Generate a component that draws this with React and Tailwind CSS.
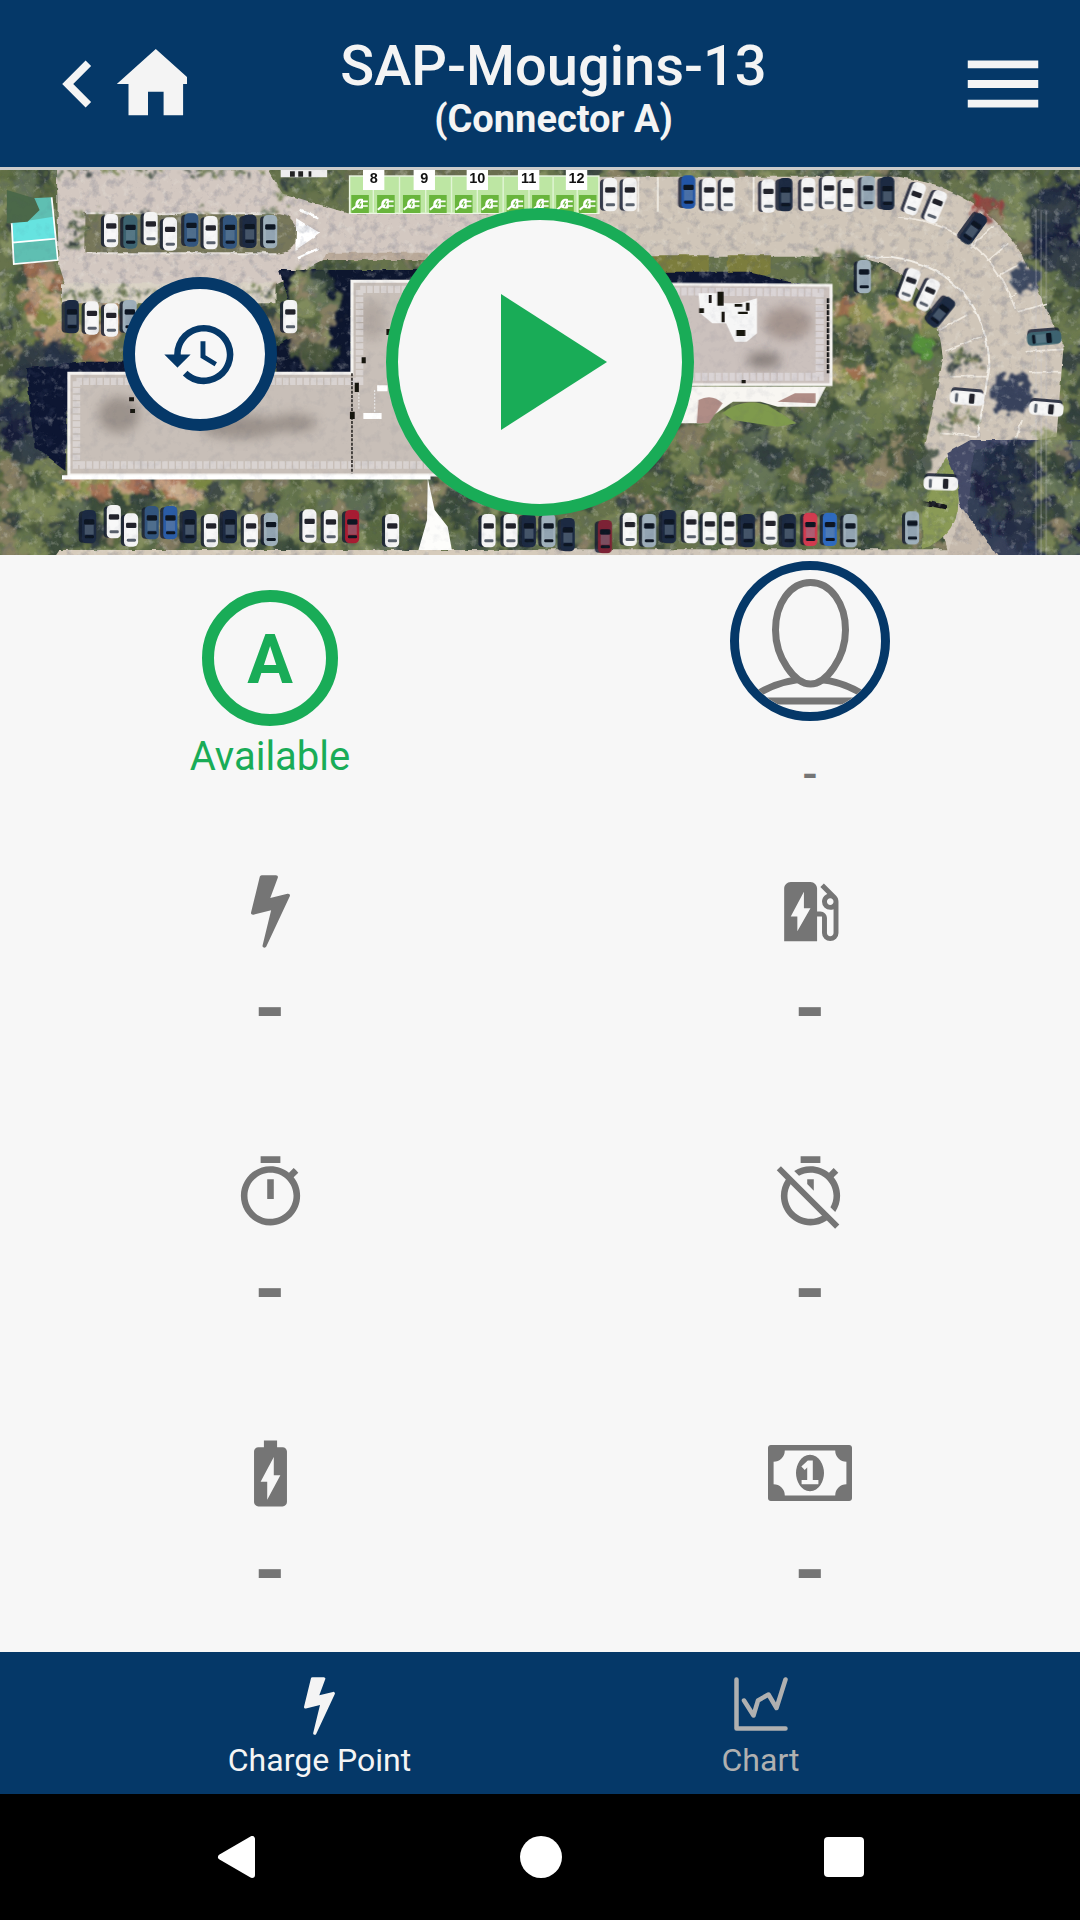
import React from "react";
import { MdBatteryChargingFull, MdEvStation, MdHistory } from "react-icons/md";

/* ---------- Icons ---------- */

const BOLT =
  "M1333 566q18 20 7 44l-540 1157q-13 25-42 25-4 0-14-2-17-5-25.5-19t-4.500-30l197-808-406 101q-4 1-12 1-18 0-31-11-18-15-13-39l201-825q4-14 16-23t28-9h328q19 0 32 12.500t13 29.500q0 8-5 18l-171 463 396-98q8-2 12-2 19 0 34 15z";

function Bolt({ className }) {
  return (
    <svg viewBox="448 128 897 1664" fill="currentColor" className={className} aria-hidden="true">
      <path d={BOLT} />
    </svg>
  );
}

function Money({ className }) {
  return (
    <svg viewBox="0 256 1920 1280" fill="currentColor" className={className} aria-hidden="true">
      <path d="M768 1152h384v-96h-128v-448h-114l-148 137 77 80q42-37 55-57h2v288h-128v96zm512-256q0 70-21 142t-59.5 134-101.5 101-138 39-138-39-101.5-101-59.5-134-21-142 21-142 59.5-134 101.5-101 138-39 138 39 101.5 101 59.5 134 21 142zm512 256v-512q-106 0-181-75t-75-181h-1152q0 106-75 181t-181 75v512q106 0 181 75t75 181h1152q0-106 75-181t181-75zm128-832v1152q0 26-19 45t-45 19h-1792q-26 0-45-19t-19-45v-1152q0-26 19-45t45-19h1792q26 0 45 19t19 45z" />
    </svg>
  );
}

function Timer() {
  return (
    <svg viewBox="0 0 24 24" fill="currentColor" className="h-[79px] w-[79px]" aria-hidden="true">
      <path d="M15 1H9v2h6V1zm-4 13h2V8h-2v6zm8.030-6.610l1.420-1.420c-.43-.51-.9-.99-1.410-1.410l-1.420 1.420C16.070 4.740 14.120 4 12 4c-4.970 0-9 4.030-9 9s4.020 9 9 9 9-4.030 9-9c0-2.120-.74-4.070-1.970-5.610zM12 20c-3.870 0-7-3.130-7-7s3.130-7 7-7 7 3.130 7 7-3.130 7-7 7z" />
    </svg>
  );
}

function TimerOff() {
  return (
    <svg viewBox="0 0 24 24" fill="currentColor" className="h-[79px] w-[79px]" aria-hidden="true">
      <path d="M19.040 4.550l-1.420 1.420C16.070 4.740 14.120 4 12 4c-1.830 0-3.530.55-4.950 1.480l1.460 1.460C9.530 6.350 10.730 6 12 6c3.870 0 7 3.130 7 7 0 1.270-.35 2.470-.94 3.490l1.450 1.450C20.450 16.530 21 14.830 21 13c0-2.120-.74-4.070-1.970-5.610l1.420-1.420-1.410-1.420zM15 1H9v2h6V1zm-4 8.440l2 2V8h-2v1.440zM3.020 4L1.750 5.270 4.500 8.030C3.550 9.450 3 11.160 3 13c0 4.970 4.020 9 9 9 1.840 0 3.550-.55 4.980-1.500l2.500 2.500 1.270-1.270-7.710-7.710L3.020 4zM12 20c-3.870 0-7-3.130-7-7 0-1.280.35-2.480.95-3.520l9.560 9.560c-1.030.61-2.230.96-3.510.96z" />
    </svg>
  );
}

function ChartIcon() {
  return (
    <svg viewBox="0 0 54 54" className="h-[54px] w-[54px]" fill="none" stroke="currentColor" strokeWidth="4.500" strokeLinecap="round" strokeLinejoin="round" aria-hidden="true">
      <path d="M2.500 2.500V51.500H51.500" />
      <path d="M10 23.500L19.500 38.500L24 23.500L34.500 17.500L42.500 31L51.500 2.500" />
    </svg>
  );
}

function Person() {
  return (
    <svg viewBox="0 0 142 142" className="h-full w-full" fill="none" stroke="#757575" strokeWidth="7" aria-hidden="true">
      <path d="M-4 142C20 118 46 109 71 109S122 118 146 142" />
      <path d="M-4 131H146" />
      <path d="M71.500 114C56 114 36.500 88 36.500 60C36.500 34 51 12.500 71.500 12.500S106.500 34 106.500 60C106.500 88 87 114 71.500 114Z" fill="#f7f7f7" />
    </svg>
  );
}

/* ---------- Aerial view of the car park ---------- */

function seeded(seed) {
  let s = seed;
  return () => {
    s = (s * 16807) % 2147483647;
    return s / 2147483647;
  };
}

const GREENS = ["#56663f", "#6f7d50", "#43533a", "#7f8b59", "#36463a", "#5f6f4b", "#8b9564", "#8f8268", "#2e3b3d", "#66755a"];
const DARKS = ["#1b2440", "#253145", "#2f3b42", "#161d38", "#39454a"];
const WARM = ["#c39c80", "#8e9554", "#cfb292", "#75843f", "#a46a50", "#b5ae78"];

function Foliage({ area, count, seed, size = 26, colors = GREENS }) {
  const [x, y, w, h] = area;
  const rnd = seeded(seed);
  const blobs = Array.from({ length: count }, () => ({
    cx: x + rnd() * w,
    cy: y + rnd() * h,
    r: size * (0.35 + rnd() * 0.75),
    c: colors[Math.floor(rnd() * colors.length)],
  }));
  return blobs.map((b, i) => <circle key={i} cx={b.cx} cy={b.cy} r={b.r} fill={b.c} opacity="0.8" />);
}

const W = "#f4f4f4";
const B = "#31557e";
const K = "#1d2b42";
const S = "#9fb0bb";
const T = "#3d6470";

function Car({ x, y, c = W, a = 0 }) {
  const light = c === W;
  return (
    <g transform={`translate(${x} ${y}) rotate(${a})`}>
      <rect x="-29" y="-46" width="46" height="94" rx="12" fill="#10162e" opacity="0.8" />
      <rect x="-20" y="-50" width="41" height="100" rx="14" fill={c} />
      <rect x="-14" y="-22" width="30" height="16" rx="4" fill={light ? "#20242c" : "#0d1423"} />
      <rect x="-12" y="26" width="27" height="9" rx="4" fill={light ? "#59616c" : "#0d1423"} />
      <rect x="-12" y="-6" width="26" height="30" fill={light ? "#ffffff" : "#7f93a5"} opacity="0.4" />
    </g>
  );
}

const WEST_CARS = [
  [322, 212, W], [378, 216, T], [437, 206, W], [493, 222, W], [555, 210, B], [611, 218, W], [667, 216, B], [724, 214, K], [784, 215, S],
  [208, 470, K], [266, 474, W], [322, 480, W], [376, 470, S], [842, 470, W],
  [258, 1100, K], [330, 1085, W], [380, 1110, W], [440, 1088, B], [494, 1088, "#2c5ba6"], [550, 1100, K], [612, 1112, W], [667, 1100, K], [728, 1112, W], [786, 1108, S],
  [898, 1098, W], [960, 1100, W], [1022, 1100, "#a81f33"], [1138, 1112, W], [1418, 1112, W], [1482, 1112, W], [1535, 1112, K],
];

const EAST_CARS = [
  [203, 104, W], [260, 104, W], [430, 96, "#2457a8"], [490, 104, W], [545, 104, W], [662, 108, W], [712, 104, K], [778, 104, W], [838, 98, W], [893, 106, W], [952, 98, S], [1008, 100, K], [1088, 116, W, 20], [1148, 140, W, 22], [1258, 206, K, 35],
  [940, 350, S], [1072, 374, W, 20], [1126, 404, W, 25], [1164, 456, K, 38], [1464, 534, T, 85], [1240, 714, W, 95], [1470, 746, W, 95], [1164, 970, W, 92],
  [24, 1112, S], [80, 1124, K], [188, 1130, "#7c2434"], [260, 1108, W], [316, 1112, S], [374, 1100, K], [438, 1100, W], [492, 1106, W], [548, 1106, W], [603, 1112, K], [668, 1104, W], [722, 1112, K], [784, 1108, "#d33a50"], [841, 1108, "#2f6bc0"], [900, 1112, S], [1080, 1104, S],
];

function Plug({ x }) {
  return (
    <g transform={`translate(${x} 105)`}>
      <rect width="51" height="54" fill="#69b53c" />
      <path d="M2 44L16 32" stroke="#fff" strokeWidth="6" />
      <path d="M12 30C12 14 22 10 34 12V40C22 42 12 40 12 30Z" fill="#fff" />
      <path d="M32 19H48M32 33H48" stroke="#fff" strokeWidth="5" />
      <path d="M27 17L21 27H28L24 36" stroke="#69b53c" strokeWidth="3" fill="none" />
    </g>
  );
}

function Bay({ x, label }) {
  return (
    <g>
      <rect x={x - 31} y="28" width="62" height="62" fill="#fff" />
      <text x={x} y="70" textAnchor="middle" fontSize="42" fontWeight="700" fill="#111" fontFamily="Liberation Sans, Arial, sans-serif">
        {label}
      </text>
    </g>
  );
}

const WEST = "translate(0 -10) scale(.3444 .3333)";
const EAST = "translate(540 -10) scale(.3444 .3333)";

function Aerial() {
  return (
    <svg viewBox="0 0 1080 385" preserveAspectRatio="xMidYMid slice" className="absolute inset-0 h-full w-full" role="img" aria-label="Aerial view of the car park">
      <defs>
        <filter id="rough" x="-5%" y="-5%" width="110%" height="110%">
          <feTurbulence type="fractalNoise" baseFrequency="0.09" numOctaves="3" seed="4" result="n" />
          <feDisplacementMap in="SourceGraphic" in2="n" scale="26" xChannelSelector="R" yChannelSelector="G" result="d" />
          <feGaussianBlur in="d" stdDeviation="0.9" />
        </filter>
        <filter id="soft" x="0" y="0" width="100%" height="100%">
          <feTurbulence type="fractalNoise" baseFrequency="0.1" numOctaves="2" seed="9" result="n" />
          <feDisplacementMap in="SourceGraphic" in2="n" scale="4" xChannelSelector="R" yChannelSelector="G" result="d" />
          <feGaussianBlur in="d" stdDeviation="0.5" />
        </filter>
        <filter id="photo" x="0" y="0" width="100%" height="100%">
          <feGaussianBlur stdDeviation="0.5" />
        </filter>
        <filter id="smudge" x="-30%" y="-30%" width="160%" height="160%">
          <feGaussianBlur stdDeviation="16" />
        </filter>
        <filter id="grain" x="0" y="0" width="100%" height="100%">
          <feTurbulence type="fractalNoise" baseFrequency="0.11" numOctaves="4" seed="2" />
          <feColorMatrix values="0 0 0 0 0.08  0 0 0 0 0.1  0 0 0 0 0.18  3 0 0 0 -1.5" />
        </filter>
        <filter id="glint" x="0" y="0" width="100%" height="100%">
          <feTurbulence type="fractalNoise" baseFrequency="0.13" numOctaves="4" seed="21" />
          <feColorMatrix values="0 0 0 0 0.85  0 0 0 0 0.84  0 0 0 0 0.78  0 3.500 0 0 -2" />
        </filter>
      </defs>

      <rect width="1080" height="385" fill="#67734c" />

      {/* Planting */}
      <g filter="url(#rough)">
        <g transform={WEST}>
          <Foliage area={[0, 20, 130, 1180]} count={130} seed={11} size={44} />
          <Foliage area={[90, 300, 230, 310]} count={70} seed={12} size={36} colors={WARM} />
          <Foliage area={[20, 560, 160, 330]} count={40} seed={13} size={50} colors={DARKS} />
          <Foliage area={[160, 950, 1408, 230]} count={320} seed={14} size={40} />
          <Foliage area={[180, 950, 420, 60]} count={45} seed={15} size={30} colors={WARM} />
          <Foliage area={[780, 300, 260, 340]} count={110} seed={16} size={46} />
          <Foliage area={[1200, 290, 368, 50]} count={30} seed={17} size={26} />
        </g>
        <g transform={EAST}>
          <Foliage area={[0, 20, 1568, 30]} count={110} seed={21} size={28} />
          <Foliage area={[300, 720, 800, 340]} count={260} seed={22} size={50} />
          <Foliage area={[780, 280, 380, 330]} count={110} seed={23} size={44} />
          <Foliage area={[1320, 30, 248, 1160]} count={220} seed={25} size={52} />
          <Foliage area={[1450, 60, 118, 280]} count={40} seed={26} size={50} colors={DARKS} />
          <Foliage area={[0, 1020, 1200, 170]} count={140} seed={28} size={32} />
        </g>
      </g>

      {/* Roads and shadows */}
      <g filter="url(#soft)">
        <g transform={WEST}>
          <path d="M165 28H780L820 100L1010 160H1570V290H960L800 375H190L170 310Z" fill="#d3c8c1" />
          <path d="M1000 28H1570V60H1000Z" fill="#6a6e50" />
          <path d="M170 1170H1570V1200H150Z" fill="#d6cbbb" />
          <path d="M950 278H1240V300H940Z" fill="#b9a999" />
          <path d="M810 330H1570V372H1020V645H800V560L870 520Z" fill="#10182f" />
          <path d="M75 625L250 605H520V650H200L190 930L100 860Z" fill="#0d1733" />
          <path d="M245 160H810C880 170 880 275 810 280H245Z" fill="#77775a" />
          <path d="M250 160H800M250 280H800" stroke="#e8e2dc" strokeWidth="6" />
          <path d="M180 400H800" stroke="#d9d2c4" strokeWidth="60" />
          <path d="M860 175L930 220L858 270Z" fill="#fff" />
          <path d="M870 150L925 175M865 295L925 268" stroke="#fff" strokeWidth="8" />
        </g>
        <g transform={EAST}>
          <path d="M-5 50H1040C1230 80 1380 180 1450 400L1520 560L1500 830L1260 870L1230 1190H-5V1168H1180L1110 900L1170 600C1160 430 1080 310 900 290H-5Z" fill="#d0c6b9" />
          <path d="M1180 880L1250 1150L1330 1190H1570V840H1250Z" fill="#2c3558" opacity="0.85" />
          <path d="M1230 1050L1330 1190H1180Z" fill="#c5b9ac" />
          <path d="M320 286H490V345H320ZM545 286H670V345H545Z" fill="#7b7d3c" />
          <path d="M340 335H600L760 375H340Z" fill="#0c1230" />
          <path d="M920 290H1020C1210 320 1300 450 1305 620L1270 830" fill="none" stroke="#f1ede6" strokeWidth="6" />
          <path d="M1040 170C1220 190 1330 290 1380 450M1160 510L1240 465M1180 572L1280 530M1190 650H1300M1250 262L1315 195M1298 305L1360 250M1330 348L1405 305M1365 410L1385 398M1390 455L1475 430M1410 575L1520 568M1420 638H1510M1165 820L1270 828M1400 780L1375 860" fill="none" stroke="#eee8df" strokeWidth="5" />
          <path d="M1180 890C1240 1000 1230 1120 1110 1168V1010Z" fill="#8a9a56" />
          <path d="M1090 1022L1180 1042" stroke="#15191c" strokeWidth="14" />
        </g>
      </g>

      {/* Trees that overhang the road */}
      <g filter="url(#rough)">
        <g transform={WEST}>
          <Foliage area={[820, 40, 175, 60]} count={50} seed={31} size={22} />
          <Foliage area={[0, 20, 110, 90]} count={30} seed={32} size={36} />
          <Foliage area={[860, 350, 90, 250]} count={50} seed={33} size={40} />
          <Foliage area={[200, 380, 600, 50]} count={50} seed={34} size={11} />
          <Foliage area={[230, 155, 580, 14]} count={24} seed={35} size={9} />
          <Foliage area={[190, 190, 60, 80]} count={16} seed={36} size={11} />
          <Foliage area={[165, 28, 600, 10]} count={30} seed={37} size={11} />
        </g>
        <g transform={EAST}>
          <circle cx="1370" cy="700" r="58" fill="#38435c" />
          <circle cx="1408" cy="358" r="40" fill="#3d4860" />
          <Foliage area={[790, 290, 140, 110]} count={40} seed={41} size={28} />
          <Foliage area={[850, 430, 250, 90]} count={30} seed={24} size={34} colors={WARM} />
          <Foliage area={[870, 500, 200, 120]} count={40} seed={42} size={36} />
          <Foliage area={[860, 620, 140, 60]} count={20} seed={27} size={24} colors={WARM} />
          <Foliage area={[880, 690, 220, 340]} count={90} seed={43} size={42} />
          <Foliage area={[340, 1010, 700, 40]} count={50} seed={44} size={22} />
          <Foliage area={[1300, 880, 260, 240]} count={50} seed={45} size={50} colors={DARKS} />
          <Foliage area={[1440, 840, 130, 340]} count={40} seed={49} size={34} />
          <Foliage area={[1270, 120, 80, 60]} count={16} seed={46} size={18} colors={["#a23b3b", "#8f4a45"]} />
          <Foliage area={[1190, 580, 100, 40]} count={20} seed={47} size={12} />
          <Foliage area={[1170, 750, 90, 60]} count={16} seed={48} size={12} />
          <path d="M1085 530C1140 515 1150 575 1130 605C1100 610 1080 580 1085 530Z" fill="#56913a" />
        </g>
      </g>

      <rect width="1080" height="385" filter="url(#grain)" opacity="0.16" />
      <rect width="1080" height="385" filter="url(#glint)" opacity="0.3" />

      {/* Buildings, bays and cars */}
      <g filter="url(#photo)">
        <g transform={WEST}>
          <path d="M32 118L150 112L168 300L40 312Z" fill="#5fbfb2" />
          <path d="M34 190L155 170L163 236L38 250Z" fill="#66e3e0" />
          <path d="M34 190L40 312L168 300L150 112M36 248L163 236" stroke="#fff" strokeWidth="5" fill="none" />
          <path d="M20 90L100 115L115 150L80 185L20 190Z" fill="#4b6848" />
          <path d="M200 640H1022V364H1570V945H200Z" fill="#c8bfb8" stroke="#f5f3f0" strokeWidth="9" />
          <g fill="#6f6660" filter="url(#smudge)" opacity="0.5">
            <ellipse cx="345" cy="765" rx="60" ry="55" />
            <ellipse cx="700" cy="800" rx="120" ry="36" />
            <ellipse cx="850" cy="790" rx="70" ry="28" />
            <ellipse cx="1080" cy="480" rx="40" ry="60" opacity="0.5" />
          </g>
          <path d="M222 664H1044V388H1570M222 664V915H1570" fill="none" stroke="#e0dcdc" strokeWidth="22" strokeDasharray="16 4" opacity="0.7" />
          <path d="M1022 640V940" stroke="#35322f" strokeWidth="5" strokeDasharray="9 4" />
          <path d="M180 952H1250" stroke="#fff" strokeWidth="13" />
          <path d="M1030 668h12v28h-12zM1016 755h14v22h-14zM1050 592h12v18h-12zM1122 507h12v18h-12zM375 712h14v12h-14zM378 747h14v12h-14z" fill="#16120f" />
          <path d="M1095 685H1125M1055 768H1108" stroke="#fff" strokeWidth="18" fill="none" />
          <path d="M1088 690V760M1042 700V750" stroke="#eee" strokeWidth="3" strokeDasharray="6 4" />
          <path d="M1242 955L1262 1050L1300 1100L1312 1170H1215L1240 1080Z" fill="#fdfdfb" />
          <path d="M815 28H950V52H815Z" fill="#eee" />
          <path d="M842 34h14v16h-14zM866 34h14v16h-14zM896 34h8v16h-8z" fill="#222" />
          {WEST_CARS.map(([x, y, c, a], i) => (
            <Car key={i} x={x} y={y} c={c} a={a} />
          ))}
        </g>
        <g transform={EAST}>
          <path d="M-5 370L845 376V674H-5Z" fill="#cbc1bd" stroke="#f5f3f0" strokeWidth="9" />
          <g filter="url(#smudge)">
            <ellipse cx="720" cy="490" rx="70" ry="50" fill="#8b7872" opacity="0.6" />
            <ellipse cx="650" cy="600" rx="50" ry="24" fill="#5c5450" opacity="0.6" />
          </g>
          <path d="M350 394L812 398V650H350" fill="none" stroke="#e0dce0" strokeWidth="24" strokeDasharray="16 4" opacity="0.7" />
          <path d="M836 415V640" stroke="#191919" strokeWidth="7" strokeDasharray="14 4" />
          <path d="M350 680H830L800 740H690L640 725H560L470 790H350Z" fill="#f8f6f2" />
          <path d="M460 720Q500 700 530 730L490 790H455ZM690 725L740 700H800V730Z" fill="#b08d86" />
          <path d="M530 760Q580 712 660 735L745 790L690 800L560 780Z" fill="#7f9a4e" />
          <path d="M460 400H520L535 430H580L630 415V520L600 545H565L540 490H500L465 460Z" fill="#f6f6f6" />
          <path d="M462 445h14v14h-14zM490 405h8v24h-8zM515 395h18v42h-18zM527 455h9v32h-9zM570 510h26v18h-26zM565 432h22v8h-22zM598 428h10v24h-10zM575 455h28v7h-28zM585 660h12v10h-12z" fill="#17130f" />
          <path d="M342 52V155M285 52V155M620 52V155" stroke="#f3efe8" strokeWidth="5" />
          <path d="M1440 150V1190M1455 150V1190M1470 150V1190" stroke="#c9cad2" strokeWidth="2" opacity="0.6" />
          {EAST_CARS.map(([x, y, c, a], i) => (
            <Car key={i} x={x} y={y} c={c} a={a} />
          ))}
        </g>
      </g>
      <rect width="1080" height="385" filter="url(#grain)" opacity="0.08" />

      {/* Charging bays */}
      <g transform={WEST}>
        <rect x="1015" y="48" width="724" height="112" fill="#bde6a3" stroke="#eef8e6" strokeWidth="4" />
        {[1084, 1160, 1236, 1311, 1386, 1461, 1536, 1606, 1676].map((x) => (
          <path key={x} d={`M${x} 50V158`} stroke="#e2f5d6" strokeWidth="4" />
        ))}
        {[1020, 1095, 1170, 1246, 1321, 1397, 1471, 1545, 1615, 1681].map((x) => (
          <Plug key={x} x={x} />
        ))}
        <Bay x={1085} label="8" />
        <Bay x={1232} label="9" />
        <Bay x={1386} label="10" />
        <Bay x={1535} label="11" />
        <Bay x={1674} label="12" />
      </g>
    </svg>
  );
}

/* ---------- Page ---------- */

function Metric({ label, children }) {
  return (
    <div className="flex h-[281px] flex-col items-center pt-[62px] text-[#757575]" aria-label={label}>
      <div className="flex h-20 items-center justify-center">{children}</div>
      <p className="mt-7 text-[80px] leading-[60px] font-bold">-</p>
    </div>
  );
}

export default function App() {
  return (
    <div className="flex min-h-screen w-full flex-col bg-[#f7f7f7] font-[Roboto,sans-serif]">
      <header className="flex items-center border-b-[3px] border-[#cccccc] bg-[#053868] pt-7 pr-[30px] pb-[27px] pl-[31px] text-[#f4f4f4]">
        <button type="button" aria-label="Back">
          <svg viewBox="0 0 20 24" className="h-[94px] w-[78px]" fill="currentColor" aria-hidden="true">
            <path d="M15.410 7.410L14 6l-6 6 6 6 1.410-1.410L10.830 12z" />
          </svg>
        </button>
        <button type="button" aria-label="Home">
          <svg viewBox="0 0 20 24" className="h-[94px] w-[78px]" fill="currentColor" aria-hidden="true">
            <path d="M10 20v-6h4v6h5v-8h3L12 3 2 12h3v8z" />
          </svg>
        </button>
        <div className="mr-9 flex-1 pt-[6px] text-center">
          <h1 className="text-[56px] leading-[64px] font-medium">SAP-Mougins-13</h1>
          <p className="text-[38px] leading-[42px] font-bold">(Connector A)</p>
        </div>
        <button type="button" aria-label="Menu">
          <svg viewBox="0 0 24 24" className="h-[94px] w-[94px]" fill="currentColor" aria-hidden="true">
            <path d="M3 18h18v-2H3v2zm0-5h18v-2H3v2zm0-7v2h18V6H3z" />
          </svg>
        </button>
      </header>

      <section className="relative">
        <Aerial />
        <div className="relative grid grid-cols-[1fr_auto_1fr] items-center pt-[38px] pb-[39px]">
          <div className="flex justify-center pb-4 pl-[14px]">
            <button type="button" aria-label="History" className="flex h-[154px] w-[154px] items-center justify-center rounded-full border-[12px] border-[#053868] bg-[#f7f7f7] text-[#053868]">
              <MdHistory size={79} />
            </button>
          </div>
          <button type="button" aria-label="Start charging" className="flex h-[308px] w-[308px] items-center justify-center rounded-full border-[12px] border-[#19ac57] bg-[#f7f7f7] pl-7 text-[#19ac57]">
            <svg viewBox="0 0 106 136" className="h-[136px] w-[106px]" fill="currentColor" aria-hidden="true">
              <path d="M0 0L106 68L0 136Z" />
            </svg>
          </button>
        </div>
      </section>

      <main className="grid flex-1 grid-cols-2 content-start">
        <div className="flex h-[254px] flex-col items-center pt-[35px] text-[#19ac57]">
          <div className="flex h-[136px] w-[136px] items-center justify-center rounded-full border-[12px] border-[#19ac57] pt-1 text-[68px] leading-none font-bold">
            A
          </div>
          <p className="mt-2 text-[40px] leading-[46px]">Available</p>
        </div>
        <div className="flex h-[254px] flex-col items-center pt-[6px] text-[#757575]">
          <div className="h-[160px] w-[160px] overflow-hidden rounded-full border-[9px] border-[#053868]">
            <Person />
          </div>
          <p className="mt-[30px] text-[44px] leading-[46px] font-medium">-</p>
        </div>

        <Metric label="Power"><Bolt className="h-[73px] w-[39px]" /></Metric>
        <Metric label="Energy"><MdEvStation size={79} /></Metric>
        <Metric label="Elapsed time"><Timer /></Metric>
        <Metric label="Idle time"><TimerOff /></Metric>
        <Metric label="Battery"><MdBatteryChargingFull size={79} /></Metric>
        <Metric label="Price"><Money className="h-[56px] w-[84px]" /></Metric>
      </main>

      <nav className="grid grid-cols-2 bg-[#053868] px-[99px] pt-[25px] pb-4 text-[32px] leading-9 text-[#f4f4f4]">
        <button type="button" className="flex flex-col items-center">
          <span className="flex h-[65px] items-start">
            <Bolt className="h-[58px] w-[31px]" />
          </span>
          Charge Point
        </button>
        <button type="button" className="flex flex-col items-center text-[#b0b0b0]">
          <span className="flex h-[65px] items-start">
            <ChartIcon />
          </span>
          Chart
        </button>
      </nav>

      <div className="flex h-[126px] items-center justify-center gap-[262px] bg-black text-white">
        <button type="button" aria-label="System back">
          <svg viewBox="0 0 42 42" className="h-[42px] w-[42px]" fill="currentColor" stroke="currentColor" strokeWidth="6" strokeLinejoin="round" aria-hidden="true">
            <path d="M36 3V39L5 21Z" />
          </svg>
        </button>
        <button type="button" aria-label="System home" className="h-[42px] w-[42px] rounded-full bg-white" />
        <button type="button" aria-label="Recent apps" className="h-10 w-10 rounded-sm bg-white" />
      </div>
    </div>
  );
}
